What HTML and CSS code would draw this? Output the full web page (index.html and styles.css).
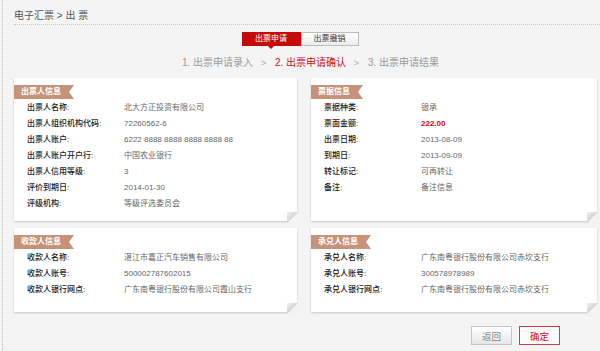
FILE: index.html
```html
<!DOCTYPE html>
<html lang="zh-CN">
<head>
<meta charset="utf-8">
<title>电子汇票 - 出票</title>
<link rel="stylesheet" href="styles.css">
</head>
<body>
<div class="page">
  <div class="crumb">电子汇票 &gt; 出 票</div>
  <div class="tabs">
    <span class="tab tab-active">出票申请</span>
    <span class="tab">出票撤销</span>
  </div>
  <div class="steps">
    <span class="step">1. 出票申请录入</span>
    <span class="sep">&gt;</span>
    <span class="step step-active">2. 出票申请确认</span>
    <span class="sep">&gt;</span>
    <span class="step">3. 出票申请结果</span>
  </div>
  <div class="cards">
    <div class="card">
      <div class="ribbon">出票人信息</div>
      <div class="row"><span class="lbl">出票人名称:</span><span class="val">北大方正投资有限公司</span></div>
      <div class="row"><span class="lbl">出票人组织机构代码:</span><span class="val">72260562-6</span></div>
      <div class="row"><span class="lbl">出票人账户:</span><span class="val">6222 8888 8888 8888 8888 88</span></div>
      <div class="row"><span class="lbl">出票人账户开户行:</span><span class="val">中国农业银行</span></div>
      <div class="row"><span class="lbl">出票人信用等级:</span><span class="val">3</span></div>
      <div class="row"><span class="lbl">评价到期日:</span><span class="val">2014-01-30</span></div>
      <div class="row"><span class="lbl">评级机构:</span><span class="val">等级评选委员会</span></div>
    </div>
    <div class="card">
      <div class="ribbon">票据信息</div>
      <div class="row"><span class="lbl">票据种类:</span><span class="val">银承</span></div>
      <div class="row"><span class="lbl">票面金额:</span><span class="val amount">222.00</span></div>
      <div class="row"><span class="lbl">出票日期:</span><span class="val">2013-08-09</span></div>
      <div class="row"><span class="lbl">到期日:</span><span class="val">2013-09-09</span></div>
      <div class="row"><span class="lbl">转让标记:</span><span class="val">可再转让</span></div>
      <div class="row"><span class="lbl">备注:</span><span class="val">备注信息</span></div>
    </div>
    <div class="card card-short">
      <div class="ribbon">收款人信息</div>
      <div class="row"><span class="lbl">收款人名称:</span><span class="val">湛江市嘉正汽车销售有限公司</span></div>
      <div class="row"><span class="lbl">收款人账号:</span><span class="val">500002787602015</span></div>
      <div class="row"><span class="lbl">收款人银行网点:</span><span class="val">广东南粤银行股份有限公司霞山支行</span></div>
    </div>
    <div class="card card-short">
      <div class="ribbon">承兑人信息</div>
      <div class="row"><span class="lbl">承兑人名称:</span><span class="val">广东南粤银行股份有限公司赤坎支行</span></div>
      <div class="row"><span class="lbl">承兑人账号:</span><span class="val">300578978989</span></div>
      <div class="row"><span class="lbl">承兑人银行网点:</span><span class="val">广东南粤银行股份有限公司赤坎支行</span></div>
    </div>
  </div>
  <div class="actions">
    <button class="btn btn-back" type="button">返回</button>
    <button class="btn btn-ok" type="button">确定</button>
  </div>
</div>
</body>
</html>
```

FILE: styles.css
```css
html, body {
  margin: 0;
  padding: 0;
  background: #f4f4f4;
}
body {
  font-family: "Liberation Sans", "Noto Sans CJK SC", sans-serif;
  color: #333;
}
.page {
  margin-left: 2px;
  border-left: 1px dotted #bdbdbd;
  min-height: 351px;
  box-sizing: border-box;
  padding: 0 3px 0 11px;
}
.crumb {
  padding-top: 10px;
  height: 14px;
  line-height: 12px;
  font-size: 10px;
  color: #555;
  border-bottom: 1px dotted #c4c4c4;
  margin-right: -3px;
}
.tabs {
  display: flex;
  justify-content: center;
  padding-right: 11px;
  margin-top: 7px;
}
.tab {
  position: relative;
  box-sizing: border-box;
  width: 58px;
  height: 14px;
  line-height: 12px;
  font-size: 8px;
  text-align: center;
  color: #333;
  background: linear-gradient(#ffffff, #ececec);
  border: 1px solid #bcbcbc;
}
.tab-active {
  width: 59px;
  color: #fff;
  background: #c50a0a;
  border-color: #c50a0a;
}
.tab-active::after {
  content: "";
  position: absolute;
  left: 50%;
  bottom: -4px;
  margin-left: -3px;
  border-left: 3px solid transparent;
  border-right: 3px solid transparent;
  border-top: 3px solid #c50a0a;
}
.steps {
  margin-top: 9px;
  height: 14px;
  line-height: 15px;
  font-size: 10px;
  color: #9a9a9a;
  padding-left: 168px;
  white-space: nowrap;
}
.sep {
  margin: 0 6px 0 5px;
  font-size: 9px;
  color: #aaa;
}
.step-active {
  color: #d0121b;
}
.cards {
  margin-top: 9px;
  display: grid;
  grid-template-columns: 283px 286px;
  column-gap: 14px;
  row-gap: 7px;
}
.card {
  position: relative;
  background: #fff;
  padding: 7px 0 9px 0;
  box-shadow: 0 1px 2px rgba(0, 0, 0, 0.18);
}
.card::after {
  content: "";
  position: absolute;
  right: -1px;
  bottom: -2px;
  width: 11px;
  height: 11px;
  background: linear-gradient(to bottom right, #f2f2f2 0%, #d4d4d4 49%, #f4f4f4 51%);
}
.card-short {
  padding-bottom: 14px;
}
.ribbon {
  display: block;
  width: fit-content;
  height: 14px;
  line-height: 14px;
  margin-bottom: 1px;
  padding: 0 13px 0 7px;
  font-size: 8px;
  font-weight: bold;
  color: #fff;
  background: #c6927a;
  clip-path: polygon(0 0, 100% 0, calc(100% - 5px) 50%, 100% 100%, 0 100%);
}
.row {
  display: flex;
  height: 16px;
  line-height: 16px;
  padding-left: 13px;
  font-size: 8px;
  white-space: nowrap;
}
.lbl {
  width: 97px;
  flex: none;
  color: #1a1a1a;
  font-weight: 500;
}
.val {
  color: #666;
}
.amount {
  color: #e0000f;
  font-weight: bold;
}
.actions {
  margin-top: 14px;
  display: flex;
  justify-content: flex-end;
  gap: 7px;
  padding-right: 37px;
}
.btn {
  width: 41px;
  height: 19px;
  padding: 0;
  font-family: "Liberation Sans", "Noto Sans CJK SC", sans-serif;
  font-size: 9.5px;
  cursor: pointer;
}
.btn-back {
  color: #888;
  background: linear-gradient(#ffffff, #e6e6e6);
  border: 1px solid #c6c6c6;
}
.btn-ok {
  color: #d0121b;
  background: #fbfbfb;
  border: 1px solid #d63a44;
}
```
